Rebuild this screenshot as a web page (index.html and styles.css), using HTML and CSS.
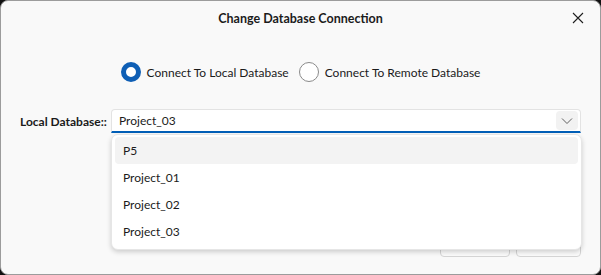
FILE: index.html
```html
<!DOCTYPE html>
<html lang="en">
<head>
<meta charset="UTF-8">
<title>Change Database Connection</title>
<link rel="stylesheet" href="styles.css">
</head>
<body>
<div class="window">
    <div class="titlebar">
        <span class="title">Change Database Connection</span>
        <span class="close">
            <svg width="12" height="12" viewBox="0 0 12 12"><path d="M1 1 L11 11 M11 1 L1 11" stroke="#1f1f1f" stroke-width="1.1" fill="none"/></svg>
        </span>
    </div>

    <div class="modes">
        <label class="radio checked"><span class="dot"></span>Connect To Local Database</label>
        <label class="radio"><span class="dot"></span>Connect To Remote Database</label>
    </div>

    <div class="field-row">
        <span class="field-label">Local Database::</span>
        <div class="combo">
            <div class="combo-box">
                <span class="combo-text">Project_03</span>
                <span class="combo-arrow">
                    <svg width="12" height="8" viewBox="0 0 12 8"><path d="M1 1.5 L6 6.5 L11 1.5" stroke="#5f5f5f" stroke-width="1" fill="none"/></svg>
                </span>
            </div>
            <!-- open dropdown list -->
            <div class="popup">
                <div class="item hover">P5</div>
                <div class="item">Project_01</div>
                <div class="item">Project_02</div>
                <div class="item">Project_03</div>
            </div>
        </div>
    </div>

    <div class="actions">
        <button class="btn btn-continue">Continue</button>
        <button class="btn btn-cancel">Cancel</button>
    </div>
</div>
</body>
</html>
```

FILE: styles.css
```css
html, body {
    margin: 0;
    padding: 0;
    background-color: #111111;
}
body {
    font-family: 'Lato', 'Noto Sans', sans-serif;
    font-size: 12px;
    color: #1b1b1b;
}
.window {
    width: 599px;
    height: 273px;
    background-color: #f9f9f9;
    border: 1px solid #9c9c9c;
    border-radius: 8px;
    display: flex;
    flex-direction: column;
    overflow: hidden;
}
.titlebar {
    height: 36px;
    display: flex;
    align-items: center;
    justify-content: center;
    position: relative;
}
.title {
    font-weight: 700;
    font-size: 12.5px;
    margin-top: -1px;
}
.close {
    position: absolute;
    right: 16px;
    top: 11px;
    width: 12px;
    height: 12px;
    display: flex;
}
.modes {
    display: flex;
    justify-content: center;
    gap: 10px;
    margin-top: 25px;
}
.radio {
    display: flex;
    align-items: center;
    gap: 6px;
}
.dot {
    width: 18px;
    height: 18px;
    border: 1px solid #8a8a8a;
    border-radius: 50%;
    background-color: #ffffff;
    box-sizing: content-box;
}
.radio.checked .dot {
    width: 10px;
    height: 10px;
    border: 5px solid #0f5fb5;
}
.field-row {
    display: flex;
    align-items: center;
    margin-top: 27px;
    padding-left: 19px;
}
.field-label {
    font-weight: 700;
    width: 91px;
    white-space: nowrap;
}
.combo {
    flex: 1;
    margin-right: 19px;
    position: relative;
}
.combo-box {
    height: 21px;
    background-color: #ffffff;
    border: 1px solid #e3e3e3;
    border-bottom: 2px solid #005fb8;
    border-radius: 4px 4px 0 0;
    display: flex;
    align-items: center;
    justify-content: space-between;
    padding-left: 7px;
}
.combo-arrow {
    width: 22px;
    height: 19px;
    margin-right: 2px;
    background-color: #f2f2f2;
    border-radius: 4px;
    display: flex;
    align-items: center;
    justify-content: center;
}
.popup {
    position: absolute;
    left: 0;
    right: -1px;
    top: 25px;
    background-color: #ffffff;
    border: 1px solid #e6e6e6;
    border-radius: 7px;
    box-shadow: 0 2px 5px rgba(0, 0, 0, 0.18);
    padding: 2px 3px 4px;
    z-index: 2;
}
.item {
    height: 27px;
    line-height: 27px;
    padding-left: 8px;
    border-radius: 4px;
}
.item.hover {
    background-color: #f3f3f3;
}
.actions {
    display: flex;
    justify-content: flex-end;
    gap: 6px;
    margin-top: auto;
    margin-bottom: 17px;
    padding-right: 19px;
}
.btn {
    height: 25px;
    background-color: #fbfbfb;
    border: 1px solid #d5d5d5;
    border-radius: 4px;
    font-family: inherit;
    font-size: 12px;
    color: #1b1b1b;
}
.btn-continue {
    width: 70px;
}
.btn-cancel {
    width: 65px;
}
```
